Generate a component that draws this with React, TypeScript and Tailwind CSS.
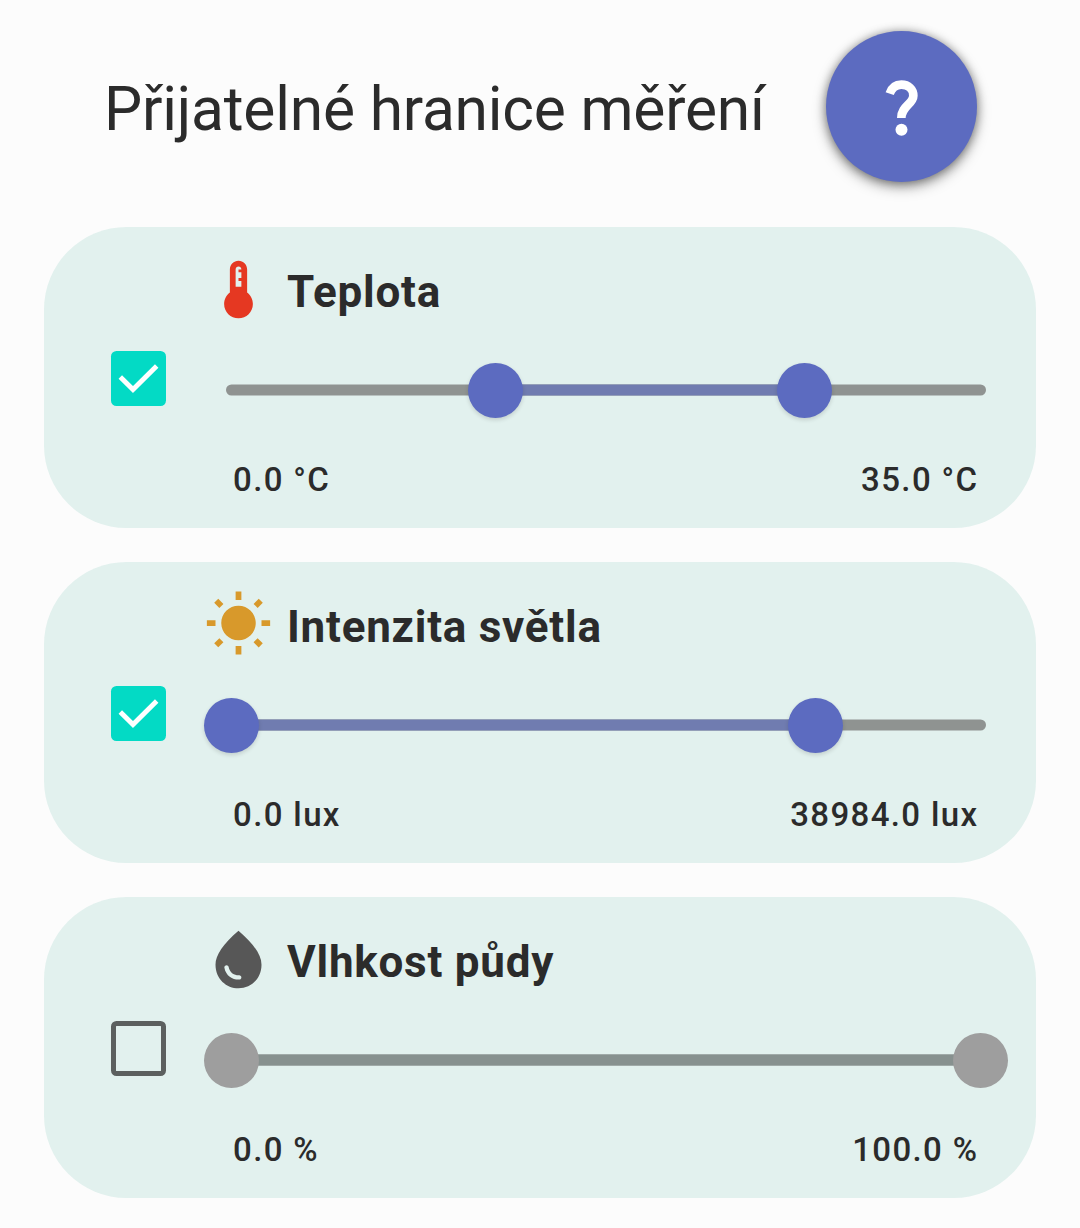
import type { ReactNode } from "react";

function Icon({ d, className }: { d: string; className: string }) {
  return (
    <svg viewBox="0 0 24 24" className={`size-[69px] shrink-0 ${className}`} fill="currentColor" aria-hidden="true">
      <path d={d} />
    </svg>
  );
}

const THERMOMETER =
  "M15 13V5c0-1.66-1.34-3-3-3S9 3.34 9 5v8c-1.21.91-2 2.37-2 4 0 2.76 2.24 5 5 5s5-2.24 5-5c0-1.63-.79-3.09-2-4zm-4-8c0-.55.45-1 1-1s1 .45 1 1h-1v1h1v2h-1v1h1v2h-2V5z";
const SUN =
  "M6.76 4.84l-1.8-1.79-1.41 1.41 1.79 1.79 1.42-1.41zM4 10.5H1v2h3v-2zm9-9.95h-2V3.5h2V.55zm7.45 3.91l-1.41-1.41-1.79 1.79 1.41 1.41 1.79-1.79zm-3.21 13.7l1.79 1.8 1.41-1.41-1.8-1.79-1.4 1.4zM20 10.5v2h3v-2h-3zm-8-5c-3.31 0-6 2.69-6 6s2.69 6 6 6 6-2.69 6-6-2.69-6-6-6zm-1 16.95h2V19.5h-2v2.95zm-7.45-3.91l1.41 1.41 1.79-1.8-1.41-1.41-1.79 1.8z";
const DROP =
  "M12 2c-5.33 4.55-8 8.48-8 11.8 0 4.98 3.8 8.2 8 8.2s8-3.22 8-8.2c0-3.32-2.67-7.25-8-11.8zM7.83 14c.37 0 .67.26.74.62.41 2.22 2.28 2.98 3.64 2.87.43-.02.79.32.79.75 0 .4-.32.73-.72.75-2.13.13-4.62-1.09-5.19-4.12-.08-.45.28-.87.74-.87z";

function Checkbox({ checked }: { checked: boolean }) {
  return checked ? (
    <span role="checkbox" aria-checked="true" className="mt-[124px] size-[55px] shrink-0 rounded-[5.5px] bg-[#03dac5]">
      <svg viewBox="0 0 55 55" className="size-full" fill="none" stroke="white" strokeWidth="4.9">
        <path d="M9.3 25.9L22 38.6L45.700 14.900" />
      </svg>
    </span>
  ) : (
    <span
      role="checkbox"
      aria-checked="false"
      className="mt-[124px] size-[55px] shrink-0 rounded-[5.5px] border-5 border-[#5c605f]"
    />
  );
}

const THUMB_SIZE = 55;
const TRAVEL = 749;

function RangeSlider({ from, to, enabled }: { from: number; to: number; enabled: boolean }) {
  const thumb = enabled
    ? "absolute top-0 size-[55px] rounded-full bg-[#5c6bc0] shadow-[0_2px_4px_rgba(0,0,0,0.14)]"
    : "absolute top-0 size-[55px] rounded-full bg-[#9e9e9e]";
  return (
    <div className="relative mt-[39px] h-[55px]">
      <div className="absolute inset-x-[22px] top-[21px] h-[11px] translate-y-[0.5px] rounded-full bg-[#8f9391]" />
      <div
        className={`absolute top-[21px] h-[11px] translate-y-[0.5px] ${enabled ? "bg-[#707cb0]" : "bg-[#87918f]"}`}
        style={{ left: THUMB_SIZE / 2 + from * TRAVEL, width: (to - from) * TRAVEL }}
      />
      <div className={thumb} style={{ left: from * TRAVEL }} />
      <div className={thumb} style={{ left: to * TRAVEL }} />
    </div>
  );
}

interface CardProps {
  icon: ReactNode;
  title: string;
  enabled: boolean;
  from: number;
  to: number;
  min: string;
  max: string;
}

function RangeCard({ icon, title, enabled, from, to, min, max }: CardProps) {
  return (
    <section className="flex h-[301px] rounded-[82.5px] bg-[#e2f1ee] pl-[67px]">
      <Checkbox checked={enabled} />
      <div className="ml-[38px] flex w-[804px] flex-col pt-7">
        <div className="flex h-[69px]">
          {icon}
          <h2 className="ml-[14px] pt-[11px] text-[44px] leading-[52px] font-bold tracking-[0.75px] whitespace-nowrap">
            {title}
          </h2>
        </div>
        <RangeSlider from={from} to={to} enabled={enabled} />
        <div className="mt-[42px] flex justify-between pr-[29.5px] pl-[29px] text-[33px] leading-[40px] font-medium tracking-[1.37px]">
          <span>{min}</span>
          <span>{max}</span>
        </div>
      </div>
    </section>
  );
}

export default function App() {
  return (
    <main className="h-[1228px] w-[1080px] overflow-hidden bg-[#fcfcfc] px-11 font-['Roboto',sans-serif] text-[#2b2b2b]">
      <header className="flex h-[227px] pt-[31px] pl-[60px]">
        <h1 className="w-[722px] pt-[43px] text-[60.5px] leading-[71px] font-normal tracking-[-0.2px] whitespace-nowrap">
          Přijatelné hranice měření
        </h1>
        <button
          aria-label="Nápověda"
          className="size-[151px] shrink-0 rounded-full bg-[#5c6bc0] shadow-[0_5px_14px_rgba(0,0,0,0.36),0_1px_10px_rgba(0,0,0,0.36)]"
        >
          <svg viewBox="78 63 453 453" className="size-full" fill="none" aria-hidden="true">
            <path
              d="M269 251C275 234 288 224 304 224C326 224 340 238 340 257C340 282 304 288 304 324"
              stroke="white"
              strokeWidth="26"
            />
            <circle cx="304.500" cy="359" r="18" fill="white" />
          </svg>
        </button>
      </header>
      <div className="flex flex-col gap-[34px]">
        <RangeCard
          icon={<Icon d={THERMOMETER} className="text-[#e53822]" />}
          title="Teplota"
          enabled
          from={264 / 749}
          to={573 / 749}
          min="0.0 °C"
          max="35.0 °C"
        />
        <RangeCard
          icon={<Icon d={SUN} className="text-[#d8992b]" />}
          title="Intenzita světla"
          enabled
          from={0}
          to={584 / 749}
          min="0.0 lux"
          max="38984.0 lux"
        />
        <RangeCard
          icon={<Icon d={DROP} className="text-[#575757]" />}
          title="Vlhkost půdy"
          enabled={false}
          from={0}
          to={1}
          min="0.0 %"
          max="100.0 %"
        />
      </div>
    </main>
  );
}
